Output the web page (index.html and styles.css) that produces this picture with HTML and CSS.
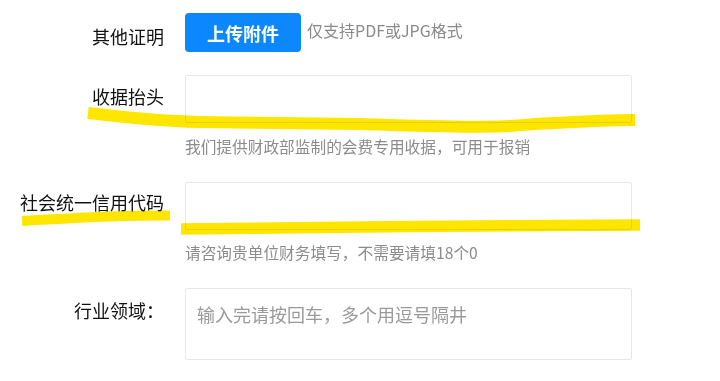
FILE: index.html
```html
<!DOCTYPE html>
<html lang="zh-CN">
<head>
<meta charset="utf-8">
<title>表单</title>
<link rel="stylesheet" href="styles.css">
</head>
<body>
<div class="page">
  <form class="form">
    <div class="row row-upload">
      <label class="label label-upload">其他证明</label>
      <div class="control upload">
        <button type="button" class="btn">上传附件</button>
        <span class="upload-tip">仅支持PDF或JPG格式</span>
      </div>
    </div>

    <div class="row row-input">
      <label class="label">收据抬头</label>
      <div class="control">
        <div class="input"></div>
        <div class="hint">我们提供财政部监制的会费专用收据，可用于报销</div>
      </div>
    </div>

    <div class="row row-input row-credit">
      <label class="label">社会统一信用代码</label>
      <div class="control">
        <div class="input"></div>
        <div class="hint">请咨询贵单位财务填写，不需要请填18个0</div>
      </div>
    </div>

    <div class="row row-area">
      <label class="label label-area">行业领域：</label>
      <div class="control">
        <div class="textarea"><span class="placeholder">输入完请按回车，多个用逗号隔井</span></div>
      </div>
    </div>
  </form>

  <svg class="marks" width="720" height="381" viewBox="0 0 720 381" aria-hidden="true">
    <path d="M88,113 C130,118 160,121 200,122 L360,124 C430,126 480,128 510,126 C545,123 580,121 635,120" />
    <path class="thin" d="M22,221 C60,219 110,215 170,215.5" />
    <path class="mid" d="M181,229 L410,226.4 L640,225" />
  </svg>
</div>
</body>
</html>
```

FILE: styles.css
```css
* { box-sizing: border-box; }

html, body {
  margin: 0;
  padding: 0;
  background: #ffffff;
}

body {
  font-family: "Noto Sans CJK SC", "Noto Sans", sans-serif;
  color: #1a1a1a;
}

.page {
  position: relative;
  width: 720px;
  height: 381px;
  overflow: hidden;
}

.form {
  margin: 0;
  padding-top: 13px;
}

.row {
  display: flex;
  align-items: flex-start;
}

.label {
  flex: 0 0 164px;
  width: 164px;
  text-align: right;
  font-size: 18px;
  line-height: 24px;
  color: #111111;
}

.control {
  margin-left: 21px;
  width: 447px;
}

/* upload row */
.label-upload {
  padding-top: 10.5px;
}

.upload {
  display: flex;
  align-items: center;
  gap: 6px;
}

.btn {
  width: 116px;
  height: 39px;
  border: none;
  border-radius: 4px;
  background: #0c87fd;
  color: #ffffff;
  font-family: inherit;
  font-size: 18px;
  font-weight: 700;
  line-height: 24px;
  padding: 0;
  margin: 0;
}

.upload-tip {
  font-size: 16px;
  line-height: 24px;
  color: #8a8a8a;
  margin-top: -5px;
}

/* input rows */
.row-input {
  margin-top: 23px;
}

.row-input .label {
  padding-top: 9px;
}

.row-credit {
  margin-top: 23px;
}

.row-credit .label {
  padding-top: 8px;
}

.input {
  height: 48px;
  border: 1px solid #e8e8e8;
  border-radius: 2px;
  background: #ffffff;
}

.hint {
  margin-top: 12px;
  font-size: 15.7px;
  line-height: 24px;
  color: #8c8c8c;
}

.row-credit .hint {
  margin-top: 11px;
}

/* textarea row */
.row-area {
  margin-top: 23px;
}

.label-area {
  padding-top: 9.5px;
}

.textarea {
  height: 72px;
  border: 1px solid #e8e8e8;
  border-radius: 2px;
  padding: 13px 11px 0;
}

.placeholder {
  display: block;
  font-size: 18px;
  line-height: 24px;
  color: #9a9a9a;
}

/* highlighter annotations drawn over the form */
.marks {
  position: absolute;
  left: 0;
  top: 0;
  pointer-events: none;
  mix-blend-mode: multiply;
}

.marks path {
  fill: none;
  stroke: #ffe600;
  stroke-width: 12;
  stroke-linecap: butt;
  stroke-linejoin: round;
}

.marks path.thin {
  stroke-width: 10;
}

.marks path.mid {
  stroke-width: 11.5;
}
```
